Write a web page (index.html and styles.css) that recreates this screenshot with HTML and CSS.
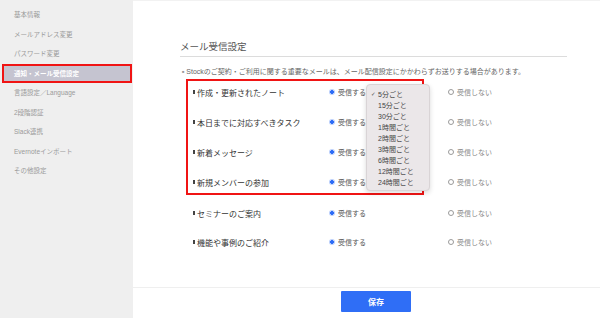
FILE: index.html
```html
<!DOCTYPE html>
<html lang="ja">
<head>
    <meta charset="UTF-8">
    <meta name="viewport" content="width=device-width, initial-scale=1.0">
    <title>メール受信設定</title>
    <link rel="stylesheet" href="styles.css">
</head>
<body>
    <div class="app">
        <aside class="sidebar">
            <ul class="nav">
                <li>基本情報</li>
                <li>メールアドレス変更</li>
                <li>パスワード変更</li>
                <li class="active">通知・メール受信設定</li>
                <li>言語設定／Language</li>
                <li>2段階認証</li>
                <li>Slack連携</li>
                <li>Evernoteインポート</li>
                <li>その他設定</li>
            </ul>
        </aside>

        <main class="main">
            <button class="close" type="button" aria-label="閉じる">
                <svg width="8" height="8" viewBox="0 0 8 8"><path d="M1 1L7 7M7 1L1 7" stroke="#777" stroke-width="1"/></svg>
            </button>

            <div class="content">
                <h1 class="title">メール受信設定</h1>
                <p class="notice"><span class="sq">■</span> Stockのご契約・ご利用に関する重要なメールは、メール配信設定にかかわらずお送りする場合があります。</p>

                <div class="list">
                    <div class="group">
                        <div class="row">
                            <span class="label"><i class="bar"></i>作成・更新されたノート</span>
                            <label class="opt"><span class="radio on"></span>受信する</label>
                            <label class="opt"><span class="radio"></span>受信しない</label>
                        </div>
                        <div class="row">
                            <span class="label"><i class="bar"></i>本日までに対応すべきタスク</span>
                            <label class="opt"><span class="radio on"></span>受信する</label>
                            <label class="opt"><span class="radio"></span>受信しない</label>
                        </div>
                        <div class="row">
                            <span class="label"><i class="bar"></i>新着メッセージ</span>
                            <label class="opt"><span class="radio on"></span>受信する</label>
                            <label class="opt"><span class="radio"></span>受信しない</label>
                        </div>
                        <div class="row">
                            <span class="label"><i class="bar"></i>新規メンバーの参加</span>
                            <label class="opt"><span class="radio on"></span>受信する</label>
                            <label class="opt"><span class="radio"></span>受信しない</label>
                        </div>
                    </div>
                    <div class="row">
                        <span class="label"><i class="bar"></i>セミナーのご案内</span>
                        <label class="opt"><span class="radio on"></span>受信する</label>
                        <label class="opt"><span class="radio"></span>受信しない</label>
                    </div>
                    <div class="row">
                        <span class="label"><i class="bar"></i>機能や事例のご紹介</span>
                        <label class="opt"><span class="radio on"></span>受信する</label>
                        <label class="opt"><span class="radio"></span>受信しない</label>
                    </div>
                </div>
            </div>

            <ul class="dropdown">
                <li class="checked"><span class="tick">✓</span>5分ごと</li>
                <li>15分ごと</li>
                <li>30分ごと</li>
                <li>1時間ごと</li>
                <li>2時間ごと</li>
                <li>3時間ごと</li>
                <li>6時間ごと</li>
                <li>12時間ごと</li>
                <li>24時間ごと</li>
            </ul>

            <div class="footer">
                <button class="save" type="button">保存</button>
            </div>

            <div class="scroll-thumb"></div>
        </main>
    </div>
</body>
</html>
```

FILE: styles.css
```css
body {
    margin: 0;
    padding: 0;
    font-family: "Liberation Sans", "Noto Sans CJK JP", sans-serif;
    background-color: #fff;
}
.app {
    display: flex;
    height: 318px;
    overflow: hidden;
}
.sidebar {
    width: 133px;
    flex-shrink: 0;
    background-color: #efefef;
}
.nav {
    list-style: none;
    margin: 0;
    padding: 5px 0 0;
}
.nav li {
    height: 19.5px;
    line-height: 19.5px;
    margin: 0 1px 0 2px;
    padding-left: 12px;
    font-size: 6.5px;
    color: #9a9a9a;
}
.nav li.active {
    background-color: #c5c4d0;
    color: #fff;
    font-weight: bold;
    box-shadow: inset 0 0 0 2px #f01414;
}
.main {
    flex: 1;
    position: relative;
    display: flex;
    flex-direction: column;
    border-top: 1px solid #f2f2f2;
}
.close {
    position: absolute;
    top: 9px;
    right: 9px;
    width: 10px;
    height: 10px;
    padding: 0;
    border: none;
    background: none;
    display: flex;
    align-items: center;
    justify-content: center;
}
.content {
    flex: 1;
    padding: 40px 52px 0 47px;
}
.title {
    margin: 0;
    padding-bottom: 3px;
    font-size: 9.5px;
    line-height: 12px;
    font-weight: normal;
    color: #555;
    border-bottom: 1px solid #dcdcdc;
}
.notice {
    margin: 10px 0 2px;
    padding-left: 2px;
    font-size: 7px;
    line-height: 10px;
    color: #666;
    white-space: nowrap;
}
.notice .sq {
    font-size: 4px;
    color: #999;
    vertical-align: 1px;
}
.list {
    display: flex;
    flex-direction: column;
    gap: 7px;
    padding-left: 6px;
}
.group {
    width: 234px;
    border: 2px solid #f01414;
    display: flex;
    flex-direction: column;
    gap: 8px;
}
.row {
    height: 22px;
    display: flex;
    align-items: center;
    padding-left: 7px;
    white-space: nowrap;
}
.group .row {
    padding-left: 5px;
}
.label {
    width: 136px;
    flex-shrink: 0;
    display: flex;
    align-items: center;
    font-size: 8px;
    color: #333;
}
.bar {
    display: inline-block;
    width: 2px;
    height: 4px;
    margin-right: 2px;
    background-color: #444;
}
.opt {
    width: 119px;
    flex-shrink: 0;
    display: flex;
    align-items: center;
    gap: 3px;
    font-size: 7px;
    color: #555;
}
.opt:last-child {
    color: #888;
}
.radio {
    width: 6px;
    height: 6px;
    box-sizing: border-box;
    border-radius: 50%;
    border: 1px solid #9a9a9a;
    background-color: #fff;
}
.radio.on {
    border: none;
    background: radial-gradient(circle, #2d6cf6 0 1.6px, #bcd0fb 2px);
}
.dropdown {
    position: absolute;
    left: 233px;
    top: 83px;
    width: 64px;
    margin: 0;
    padding: 3px 0 0;
    box-sizing: border-box;
    height: 107px;
    list-style: none;
    background-color: #ebe7e9;
    border: 1px solid #d9d4d6;
    border-radius: 4px;
    box-shadow: 0 2px 5px rgba(0, 0, 0, 0.15);
}
.dropdown li {
    display: flex;
    align-items: center;
    height: 11px;
    padding-left: 11px;
    font-size: 7px;
    color: #444;
}
.dropdown .tick {
    width: 6px;
    margin-left: -7px;
    margin-right: 1px;
    font-family: "DejaVu Sans", sans-serif;
    font-size: 5.5px;
}
.footer {
    height: 27px;
    border-top: 1px solid #efefef;
    display: flex;
    justify-content: center;
    align-items: flex-start;
    padding-top: 3px;
}
.save {
    width: 70px;
    height: 21px;
    border: none;
    border-radius: 1px;
    background-color: #2f6ef6;
    color: #fff;
    font-family: inherit;
    font-size: 8px;
    font-weight: bold;
}
.scroll-thumb {
    position: absolute;
    right: 1px;
    top: 70px;
    width: 3px;
    height: 79px;
    border-radius: 2px;
    background-color: #bdbdbd;
}
```
